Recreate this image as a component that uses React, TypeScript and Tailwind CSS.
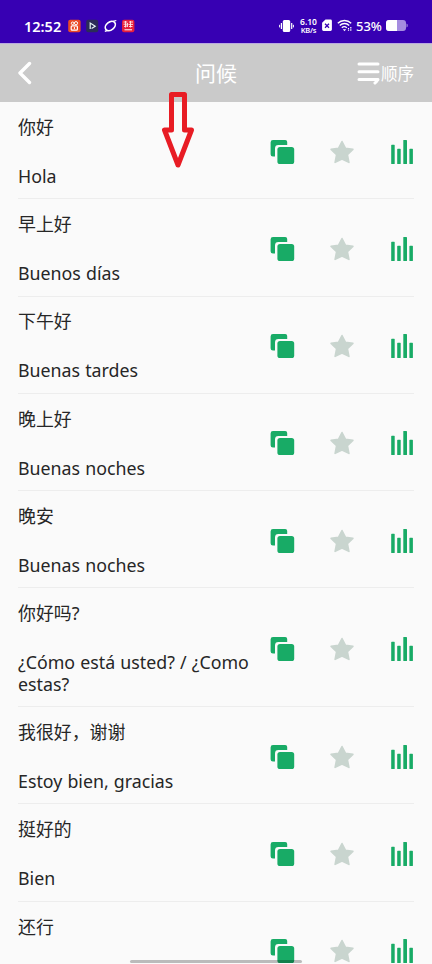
interface Phrase {
  zh: string;
  es: string;
}

const phrases: Phrase[] = [
  { zh: '你好', es: 'Hola' },
  { zh: '早上好', es: 'Buenos días' },
  { zh: '下午好', es: 'Buenas tardes' },
  { zh: '晚上好', es: 'Buenas noches' },
  { zh: '晚安', es: 'Buenas noches' },
  { zh: '你好吗?', es: '¿Cómo está usted? / ¿Como estas?' },
  { zh: '我很好，谢谢', es: 'Estoy bien, gracias' },
  { zh: '挺好的', es: 'Bien' },
  { zh: '还行', es: '' },
];

function CopyIcon() {
  return (
    <svg width="25" height="25" viewBox="0 0 25 25" fill="#18ab66">
      <path d="M3 0h12.200a2 2 0 0 1 2 2v3H8.400a3.400 3.400 0 0 0-3.400 3.400v8.100H2.900a2.300 2.300 0 0 1-2.300-2.300V2.400A2.400 2.400 0 0 1 3 0Z" />
      <rect x="7.400" y="7" width="16.800" height="17" rx="2.600" />
    </svg>
  );
}

function StarIcon() {
  return (
    <svg width="26" height="25" viewBox="0 0 26 25">
      <path
        d="M13 1.500l3.500 6.900 7.400 1-5.500 5.300 1.500 7.700L13 19l-6.900 3.400 1.500-7.700-5.500-5.300 7.400-1Z"
        fill="#c9d5cf"
        stroke="#c9d5cf"
        strokeWidth="1.600"
        strokeLinejoin="round"
      />
    </svg>
  );
}

function BarsIcon() {
  return (
    <svg width="23" height="25" viewBox="0 0 23 25" fill="#18ab66">
      <rect x="0.200" y="4.800" width="3.500" height="19.200" rx="0.600" />
      <rect x="6.200" y="8.800" width="3.500" height="15.200" rx="0.600" />
      <rect x="12.300" y="0" width="3.700" height="24" rx="0.600" />
      <rect x="18.400" y="8.800" width="3.500" height="15.200" rx="0.600" />
    </svg>
  );
}

function StatusBar() {
  return (
    <div className="h-[43px] bg-[#3700b3] pt-2 pl-6 pr-6 flex items-center justify-between text-white">
      <div className="flex items-center">
        <span className="w-[44px] text-[14.5px] leading-5 font-semibold whitespace-nowrap">12:52</span>
        <svg className="mt-px" width="68" height="14" viewBox="0 0 68 14" fill="none">
          <rect x="0.200" y="0.800" width="12.400" height="12.400" rx="2" fill="#ea4a26" />
          <rect x="3.200" y="6.800" width="6.200" height="4.400" rx="1" stroke="#fff" strokeWidth="1.200" />
          <circle cx="4.600" cy="4.300" r="1.300" stroke="#fff" />
          <circle cx="8" cy="4.200" r="1.600" stroke="#fff" />
          <path d="M6.400 8v2" stroke="#fff" />
          <rect x="18.200" y="0.800" width="12" height="12.400" rx="2" fill="#2b2c58" />
          <path d="M22.200 10V4l5 3.200-3.600 2.300" stroke="#e6f5f5" strokeWidth="1.200" />
          <ellipse cx="42.300" cy="7" rx="5.600" ry="3.900" transform="rotate(-38 42.300 7)" stroke="#fff" strokeWidth="1.700" />
          <path d="M36.800 12.400l3-1M45 2.300l3.300-.8" stroke="#fff" strokeWidth="1.200" />
          <rect x="54" y="0.800" width="12.400" height="12.400" rx="2" fill="#e71f3c" />
          <path d="M55.500 3h3.800M61 3h4M55.500 5.200h3.500M60.500 5.400h4.500M56 7.500l3-.5M61 7.500h3.500M57.500 2v6.500M62.500 2v6.500M59.500 4v4" stroke="#ffe8e8" strokeWidth="0.900" />
          <path d="M56.500 10.800h7.500" stroke="#fff" strokeWidth="1" />
        </svg>
      </div>
      <div className="flex items-center">
        <svg width="15" height="14" viewBox="0 0 15 14" fill="none" stroke="#fff">
          <rect x="3.800" y="1" width="7.400" height="12" rx="1.500" fill="#fff" stroke="none" />
          <path d="M2.400 4v6M12.700 4v6" strokeWidth="1.200" />
          <path d="M0.600 5.800v2.600M14.400 5.800v2.600" strokeWidth="1" />
        </svg>
        <div className="ml-[5px] w-[19px] text-center font-semibold whitespace-nowrap">
          <div className="text-[8.5px] leading-[9px]">6.10</div>
          <div className="text-[7.500px] leading-[8px] tracking-[-0.2px]">KB/s</div>
        </div>
        <svg className="ml-[4px]" width="10" height="13" viewBox="0 0 10 13">
          <path d="M3.500.5H8.500a1.400 1.400 0 0 1 1.400 1.400v8.700A1.400 1.400 0 0 1 8.500 12h-7A1.400 1.400 0 0 1 .1 10.600V3.800Z" fill="#fff" />
          <path d="M3 4.800l4 4M7 4.800l-4 4" stroke="#3700b3" strokeWidth="1.300" />
        </svg>
        <svg className="ml-[5px]" width="16" height="13" viewBox="0 0 16 13" fill="none" stroke="#fff">
          <path d="M.8 4.200a9.600 9.600 0 0 1 13.400 0M2.800 6.500a6.600 6.600 0 0 1 9.400 0M4.800 8.700a3.800 3.800 0 0 1 5 0" strokeWidth="1.400" />
          <path d="M5.800 10.200h3.400L7.500 12.200Z" fill="#fff" stroke="none" />
          <path d="M11.500 9v3M13.800 8v4" strokeWidth="1.200" strokeDasharray="1.500 .7" />
        </svg>
        <span className="ml-[3px] w-[30px] text-[13px] leading-5 font-medium whitespace-nowrap">53%</span>
        <svg width="22" height="11" viewBox="0 0 22 11">
          <rect x="0" y="0" width="20" height="11" rx="3" fill="#a58ce0" />
          <path d="M20.500 3.500c1 .5 1.200 1 1.200 2s-.2 1.500-1.200 2Z" fill="#a58ce0" />
          <path d="M3 0h8v11H3a3 3 0 0 1-3-3V3a3 3 0 0 1 3-3Z" fill="#fff" />
        </svg>
      </div>
    </div>
  );
}

function Header() {
  return (
    <header className="h-[59px] bg-[#cacaca] border-t border-[#b9a9e0] px-[18px] grid grid-cols-3 items-center text-white">
      <svg width="14" height="24" viewBox="0 0 14 24" fill="none">
        <path d="M11.500 2.500L2 12l9.500 9.500" stroke="#fff" strokeWidth="3.400" strokeLinecap="round" strokeLinejoin="round" />
      </svg>
      <h1 className="text-center text-[21px] leading-7">问候</h1>
      <div className="flex items-center justify-end whitespace-nowrap">
        <svg width="24" height="23" viewBox="0 0 24 23" fill="none" stroke="#fff" strokeWidth="3" strokeLinecap="round">
          <path d="M2 2h19M2 9.700h19M2 17.500h19" />
          <path d="M20.500 17.500c-.2 1.800-1.200 2.500-2.500 3.500" strokeWidth="3" />
        </svg>
        <span className="pt-px text-[16.500px] leading-6">顺序</span>
      </div>
    </header>
  );
}

function PhraseRow({ phrase }: { phrase: Phrase }) {
  return (
    <li className="flex shrink-0 items-center justify-between border-b border-[#ededed] pt-[14.9px] pb-[11px] text-[#262626]">
      <div className="w-[240px]">
        <p className="mb-[27.4px] text-[17.9px] leading-[21.5px]">{phrase.zh}</p>
        <p className="min-h-[21.5px] text-[17.8px] leading-[21.5px] [word-spacing:0.5px]">{phrase.es}</p>
      </div>
      <div className="flex items-center">
        <CopyIcon />
        <span className="ml-[34px] mr-9">
          <StarIcon />
        </span>
        <BarsIcon />
      </div>
    </li>
  );
}

export default function App() {
  return (
    <div className="relative flex h-[964px] w-[432px] flex-col overflow-hidden bg-[#fafafa] font-['Noto_Sans','Noto_Sans_CJK_SC',sans-serif]">
      <StatusBar />
      <Header />
      <ul className="flex min-h-0 flex-1 flex-col overflow-hidden px-[18px]">
        {phrases.map((phrase, index) => (
          <PhraseRow key={index} phrase={phrase} />
        ))}
      </ul>

      {/* swipe-down hint */}
      <svg className="absolute left-[160px] top-[90px]" width="36" height="80" viewBox="0 0 36 80" fill="none">
        <path
          d="M11.500 4.500H24.500V40H31.500L18 75L4.500 40H11.500Z"
          stroke="#e81c24"
          strokeWidth="5"
          strokeLinejoin="round"
        />
      </svg>

      {/* gesture bar */}
      <div className="absolute bottom-[1px] left-[130px] h-[3px] w-[172px] rounded-full bg-black/25" />
    </div>
  );
}
